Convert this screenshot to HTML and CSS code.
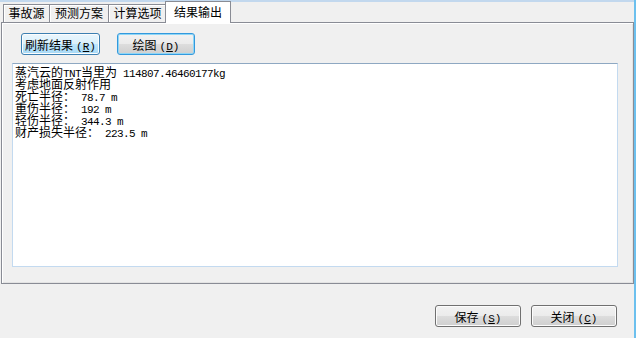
FILE: index.html
```html
<!DOCTYPE html>
<html lang="zh-CN">

<head>
    <meta charset="UTF-8">
    <title>结果输出</title>
    <link rel="stylesheet" href="styles.css">
</head>

<body>
    <div class="window">
        <div class="tabBar">
            <div class="tab tab1">事故源</div>
            <div class="tab tab2">预测方案</div>
            <div class="tab tab3">计算选项</div>
            <div class="tab active">结果输出</div>
        </div>
        <div class="tabPanel">
            <div class="toolRow">
                <button class="btn btnBlue">刷新结果<span class="key">(<u>R</u>)</span></button>
                <button class="btn btnFocus">绘图<span class="key">(<u>D</u>)</span></button>
            </div>
            <div class="output">
                <div class="line">蒸汽云的<span class="lat">TNT</span>当里为<span class="lat"> 114807.46460177kg</span></div>
                <div class="line">考虑地面反射作用</div>
                <div class="line">死亡半径：<span class="lat"> 78.7 m</span></div>
                <div class="line">重伤半径：<span class="lat"> 192 m</span></div>
                <div class="line">轻伤半径：<span class="lat"> 344.3 m</span></div>
                <div class="line">财产损失半径：<span class="lat"> 223.5 m</span></div>
            </div>
        </div>
        <div class="footer">
            <button class="btn btnWide">保存<span class="key">(<u>S</u>)</span></button>
            <button class="btn btnWide">关闭<span class="key">(<u>C</u>)</span></button>
        </div>
    </div>
</body>

</html>
```

FILE: styles.css
```css
* {
    margin: 0;
    padding: 0;
    box-sizing: border-box;
}

body {
    width: 636px;
    height: 338px;
    overflow: hidden;
    background-color: #f0f0f0;
    font-family: "Noto Sans CJK SC", "Liberation Sans", sans-serif;
    font-size: 12px;
    color: #000;
}

/* latin text keeps the 6px cell of the old bitmap font */
.lat {
    font-family: "Liberation Mono", monospace;
    font-size: 11px;
    letter-spacing: -0.6px;
    line-height: 12px;
    color: #000;
}

.key {
    font-family: "Liberation Mono", monospace;
    font-size: 11px;
    margin-left: 3px;
}

.window {
    width: 636px;
    height: 338px;
    display: flex;
    flex-direction: column;
    border-right: 2px solid #6cc0ee;
}

.tabBar {
    height: 22px;
    display: flex;
    align-items: flex-end;
    padding-left: 3px;
    background: linear-gradient(#c2d8ee 0, #c2d8ee 2px, #f0f0f0 2px);
}

.tab {
    height: 18px;
    line-height: 16px;
    text-align: center;
    border: 1px solid #898c95;
    border-bottom: none;
    background-color: #f0f0f0;
    box-shadow: inset 1px 1px 0 #fff;
}

.tab1 {
    width: 47px;
}

.tab2 {
    width: 60px;
    margin-left: -1px;
}

.tab3 {
    width: 59px;
    margin-left: -1px;
}

.tab.active {
    width: 66px;
    height: 22px;
    line-height: 20px;
    margin-left: -2px;
    margin-bottom: -1px;
    background-color: #fff;
    box-shadow: none;
    position: relative;
    z-index: 1;
}

.tabPanel {
    width: 633px;
    height: 262px;
    margin-left: 1px;
    border: 1px solid #898c95;
    box-shadow: inset 1px 1px 0 #fff, inset -1px -1px 0 #e3e3e3;
    padding: 10px 0 0 10px;
}

.toolRow {
    display: flex;
    gap: 17px;
    padding-left: 9px;
    margin-bottom: 8px;
}

.btn {
    height: 22px;
    font-family: inherit;
    font-size: 12px;
    color: #000;
    border: 1px solid #707070;
    border-radius: 3px;
    background: linear-gradient(#f2f2f2 0, #ebebeb 50%, #dddddd 50%, #cfcfcf 100%);
    box-shadow: inset 0 0 0 1px #fcfcfc;
}

.btnBlue {
    width: 79px;
    border-color: #3c7fb1;
    background: linear-gradient(#eaf6fd 0, #d9f0fc 50%, #bee6fd 50%, #a7d9f5 100%);
}

.btnFocus {
    width: 78px;
    border-color: #3399dd;
    box-shadow: inset 0 0 0 1px #8fd6f6;
}

.btnWide {
    width: 86px;
}

.output {
    width: 606px;
    height: 204px;
    padding: 2px 2px;
    background-color: #fff;
    border: 1px solid #c3daf0;
    border-top-color: #8ea8c2;
}

.line {
    height: 12px;
    line-height: 12px;
    white-space: pre;
}

.footer {
    flex: 1;
    display: flex;
    justify-content: flex-end;
    align-items: flex-start;
    gap: 10px;
    padding: 21px 17px 0 0;
}
```
